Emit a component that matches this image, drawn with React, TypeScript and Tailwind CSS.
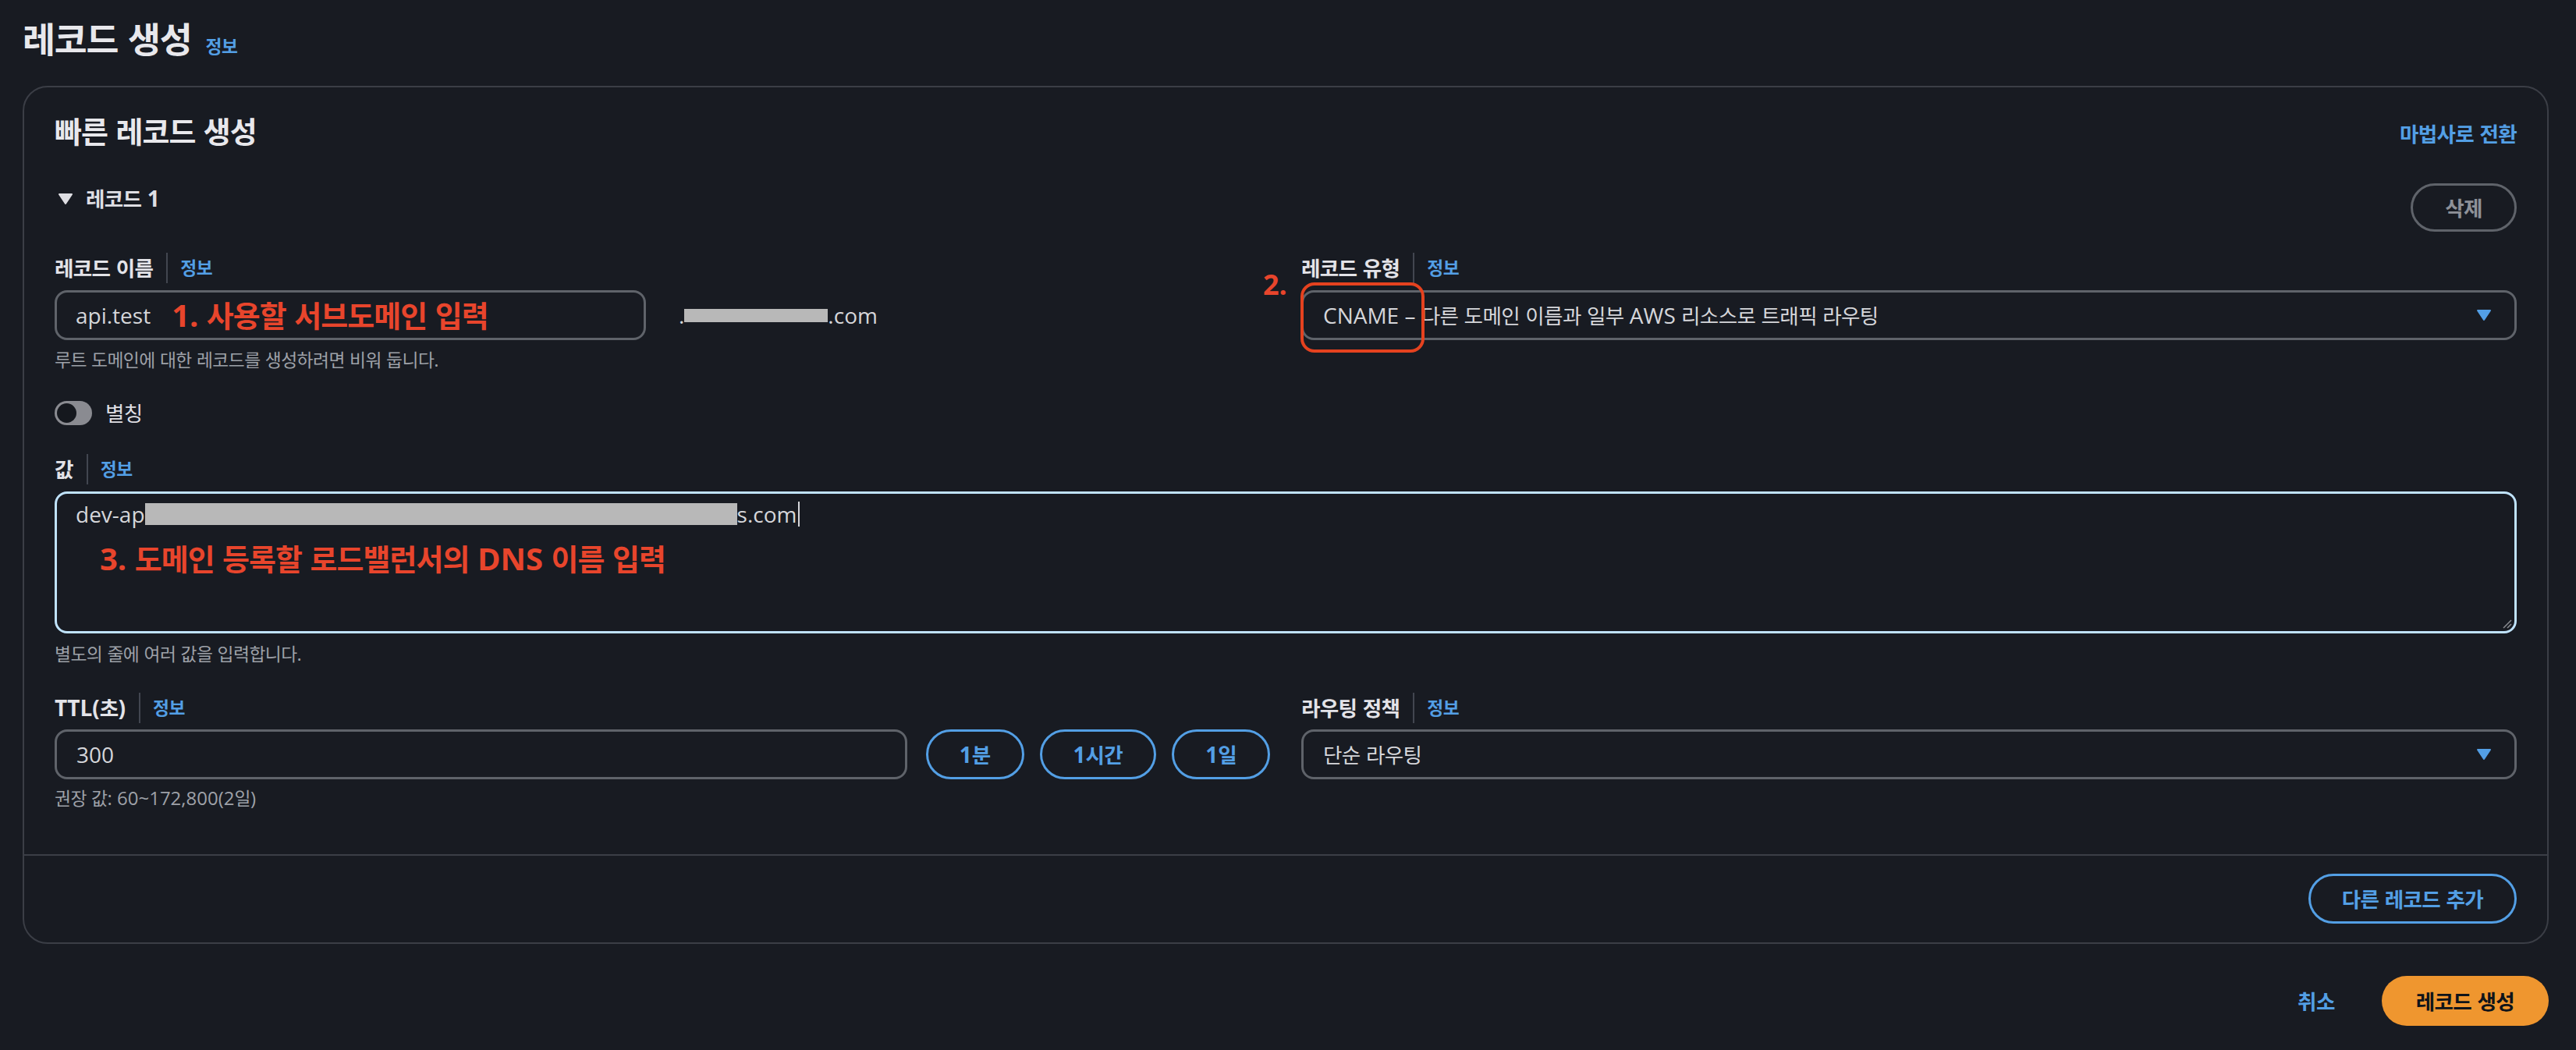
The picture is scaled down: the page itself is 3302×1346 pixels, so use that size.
import React from 'react';

const HANGUL = /([\u3131-\u318e\uac00-\ud7a3]+)/;

// Noto CJK hangul is a bit wider than the console font in the capture, so hangul runs get squeezed slightly
const Ko = ({ text }: { text: string }) => (
  <>
    {text.split(HANGUL).map((part, i) =>
      i % 2 === 1 ? (
        <span key={i} className="text-[0.95em] tracking-[-0.025em]">
          {part}
        </span>
      ) : (
        <React.Fragment key={i}>{part}</React.Fragment>
      )
    )}
  </>
);

const CaretDown = ({ className }: { className?: string }) => (
  <svg viewBox="0 0 20 16" className={className} fill="currentColor">
    <path d="M2 2h16L10 14z" stroke="currentColor" strokeWidth="2" strokeLinejoin="round" />
  </svg>
);

const FieldLabel = ({ text }: { text: string }) => (
  <div className="flex h-[40px] items-center">
    <span className="font-bold text-[#e3e3e8]">
      <Ko text={text} />
    </span>
    <span className="ml-[17px] mr-[16px] h-[39px] w-[2px] bg-[#424650]" />
    <span className="text-[24px] font-bold text-[#539fe5]">
      <Ko text="정보" />
    </span>
  </div>
);

const Select = ({ value }: { value: string }) => (
  <div className="flex h-[64px] items-center justify-between rounded-[16px] border-[3px] border-[#5f636a] pl-[25px] pr-[29px] text-[#d5d6da]">
    <span>
      <Ko text={value} />
    </span>
    <CaretDown className="h-[16px] w-[20px] text-[#539fe5]" />
  </div>
);

const Hint = ({ text, className }: { text: string; className: string }) => (
  <p className={`${className} text-[24px] leading-[32px] text-[#9ea1a8]`}>
    <Ko text={text} />
  </p>
);

export default function App() {
  return (
    <div className="min-h-screen bg-[#181b22] pb-[34px] pl-[29px] pr-[35px] pt-[22px] font-['Open_Sans','Noto_Sans_CJK_KR',sans-serif] text-[28px] leading-[36px] text-[#d5d6da]">
      <div className="flex items-baseline gap-[18px]">
        <h1 className="text-[48px] font-bold leading-[56px] text-[#e8e8ec]">
          <Ko text="레코드 생성" />
        </h1>
        <a className="text-[24px] font-bold text-[#539fe5]">
          <Ko text="정보" />
        </a>
      </div>

      <div className="mt-[32px] rounded-[32px] border-2 border-[#3b3e46]">
        <div className="px-[39px] pb-[55px] pt-[32px]">
          <div className="flex items-center justify-between">
            <h2 className="text-[40px] font-bold leading-[48px] text-[#e8e8ec]">
              <Ko text="빠른 레코드 생성" />
            </h2>
            <a className="mt-[6px] font-bold text-[#539fe5]">
              <Ko text="마법사로 전환" />
            </a>
          </div>

          <div className="mt-[43px] flex items-start justify-between">
            <div className="mt-[1px] flex items-center gap-[16px] pl-[4px] font-bold text-[#dedee3]">
              <CaretDown className="h-[16px] w-[20px]" />
              <span>
                <Ko text="레코드 1" />
              </span>
            </div>
            <button type="button" className="h-[62px] w-[136px] rounded-full border-[3px] border-[#5f636a] font-bold text-[#8e9198]">
              <Ko text="삭제" />
            </button>
          </div>

          <div className="mt-[26px] grid grid-cols-2 gap-x-[40px]">
            <div>
              <FieldLabel text="레코드 이름" />
              <div className="mt-[9px] flex items-center">
                <div className="flex h-[64px] w-[758px] items-center rounded-[16px] border-[3px] border-[#5f636a] pl-[24px]">
                  <span>api.test</span>
                  <span className="ml-[27px] text-[40px] font-bold text-[#e8452c]">
                    <Ko text="1. 사용할 서브도메인 입력" />
                  </span>
                </div>
                <div className="ml-[42px] flex items-center">
                  <span>.</span>
                  <span className="h-[17px] w-[184px] bg-[#b8b8b8]" />
                  <span>.com</span>
                </div>
              </div>
              <Hint className="mt-[9px]" text="루트 도메인에 대한 레코드를 생성하려면 비워 둡니다." />
            </div>
            <div>
              <FieldLabel text="레코드 유형" />
              <div className="relative mt-[9px]">
                <Select value="CNAME – 다른 도메인 이름과 일부 AWS 리소스로 트래픽 라우팅" />
                <span className="absolute left-[-49px] top-[-25px] text-[36px] font-bold text-[#e8452c]">2.</span>
                <div className="absolute left-[-1px] top-[-10px] h-[90px] w-[159px] rounded-[18px] border-[4px] border-[#e5421f]" />
              </div>
            </div>
          </div>

          <div className="mt-[35px] flex h-[32px] items-center gap-[17px]">
            <span className="flex h-[31px] w-[48px] items-center rounded-full bg-[#8a8b91] pl-[3px]">
              <span className="h-[25px] w-[25px] rounded-full bg-[#15181e]" />
            </span>
            <span className="text-[#dedee3]">
              <Ko text="별칭" />
            </span>
          </div>

          <div className="mt-[36px]">
            <FieldLabel text="값" />
          </div>
          <div className="relative mt-[9px] h-[182px] rounded-[16px] border-[3px] border-[#bfe2fb] pl-[24px] pt-[8px]">
            <div className="flex items-center">
              <span>dev-ap</span>
              <span className="h-[28px] w-[759px] bg-[#b8b8b8]" />
              <span>s.com</span>
              <span className="ml-[2px] h-[32px] w-[2px] bg-[#d5d6da]" />
            </div>
            <p className="ml-[31px] mt-[15px] text-[40px] font-bold leading-[48px] text-[#e8452c]">
              <Ko text="3. 도메인 등록할 로드밸런서의 DNS 이름 입력" />
            </p>
            <svg viewBox="0 0 12 12" className="absolute bottom-[3px] right-[3px] h-[12px] w-[12px] text-[#8a8b91]">
              <path d="M1 11L11 1M6 11l5-5" stroke="currentColor" strokeWidth="1.5" />
            </svg>
          </div>
          <Hint className="mt-[10px]" text="별도의 줄에 여러 값을 입력합니다." />

          <div className="mt-[32px] grid grid-cols-2 gap-x-[40px]">
            <div>
              <FieldLabel text="TTL(초)" />
              <div className="mt-[8px] flex items-center">
                <div className="flex h-[64px] flex-1 items-center rounded-[16px] border-[3px] border-[#5f636a] pl-[25px]">300</div>
                <div className="ml-[24px] flex gap-[20px]">
                  {['1분', '1시간', '1일'].map((t) => (
                    <button key={t} type="button" className="h-[64px] rounded-full border-[3px] border-[#539fe5] px-[40px] font-bold text-[#539fe5]">
                      <Ko text={t} />
                    </button>
                  ))}
                </div>
              </div>
              <Hint className="mt-[8px]" text="권장 값: 60~172,800(2일)" />
            </div>
            <div>
              <FieldLabel text="라우팅 정책" />
              <div className="mt-[8px]">
                <Select value="단순 라우팅" />
              </div>
            </div>
          </div>
        </div>

        <div className="flex justify-end border-t-2 border-[#3b3e46] px-[39px] pb-[24px] pt-[23px]">
          <button type="button" className="h-[64px] rounded-full border-[3px] border-[#539fe5] px-[40px] font-bold text-[#539fe5]">
            <Ko text="다른 레코드 추가" />
          </button>
        </div>
      </div>

      <div className="mt-[41px] flex justify-end gap-[20px]">
        <button type="button" className="h-[64px] px-[40px] font-bold text-[#539fe5]">
          <Ko text="취소" />
        </button>
        <button type="button" className="h-[64px] rounded-full bg-[#ef962f] px-[44px] font-bold text-[#0f141a]">
          <Ko text="레코드 생성" />
        </button>
      </div>
    </div>
  );
}
